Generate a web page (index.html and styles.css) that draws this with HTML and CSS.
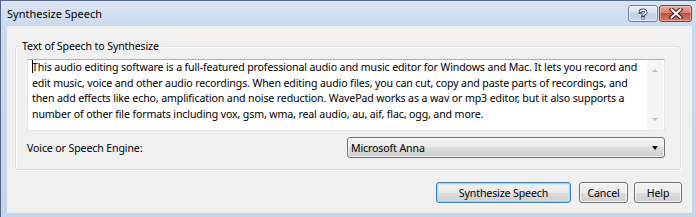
FILE: index.html
```html
<!DOCTYPE html>
<html>
<head>
<meta charset="utf-8">
<link rel="stylesheet" href="styles.css">
</head>
<body>
<div class="window">
  <div class="titlebar">
    <span class="title">Synthesize Speech</span>
    <div class="caption-buttons">
      <div class="cap-btn cap-help">
        <svg width="12" height="12" viewBox="0 0 12 12"><path d="M3.2 4.2 C3.2 1.6 8.8 1.4 8.8 4.2 C8.8 6 6 6 6 7.6" fill="none" stroke="#2d3b52" stroke-width="3.2" stroke-linecap="square"/><path d="M3.2 4.2 C3.2 1.6 8.8 1.4 8.8 4.2 C8.8 6 6 6 6 7.6" fill="none" stroke="#fff" stroke-width="1.6"/><rect x="4.6" y="8.6" width="2.8" height="2.8" fill="#2d3b52"/><rect x="5.2" y="9.2" width="1.6" height="1.6" fill="#fff"/></svg>
      </div>
      <div class="cap-btn cap-close">
        <svg width="14" height="11" viewBox="0 0 14 11"><path d="M2.5 1.5 L11.5 9.5 M11.5 1.5 L2.5 9.5" stroke="#4a1a12" stroke-width="4" stroke-linecap="square"/><path d="M2.5 1.5 L11.5 9.5 M11.5 1.5 L2.5 9.5" stroke="#fff" stroke-width="2" stroke-linecap="square"/></svg>
      </div>
    </div>
  </div>
  <div class="client">
    <fieldset class="group">
      <legend class="group-label">Text of Speech to Synthesize</legend>
      <div class="textbox">
        <div class="tb-text">
          <div class="line"><span class="caret"></span>This audio editing software is a full-featured professional audio and music editor for Windows and Mac. It lets you record and</div>
          <div class="line">edit music, voice and other audio recordings. When editing audio files, you can cut, copy and paste parts of recordings, and</div>
          <div class="line">then add effects like echo, amplification and noise reduction. WavePad works as a wav or mp3 editor, but it also supports a</div>
          <div class="line">number of other file formats including vox, gsm, wma, real audio, au, aif, flac, ogg, and more.</div>
        </div>
        <div class="tb-scroll">
          <span class="sarrow up"></span>
          <span class="sarrow down"></span>
        </div>
      </div>
      <div class="engine-row">
        <span class="engine-label">Voice or Speech Engine:</span>
        <div class="combo">
          <span class="combo-text">Microsoft Anna</span>
          <span class="combo-arrow"></span>
        </div>
      </div>
    </fieldset>
    <div class="button-row">
      <div class="btn btn-default btn-synth">Synthesize Speech</div>
      <div class="btn btn-cancel">Cancel</div>
      <div class="btn btn-help">Help</div>
    </div>
  </div>
</div>
</body>
</html>
```

FILE: styles.css
```css
html, body {
  margin: 0;
  padding: 0;
  background: #ffffff;
}
body {
  font-family: "Noto Sans", "Open Sans", sans-serif;
  font-size: 10.6px;
  letter-spacing: -0.13px;
  color: #000;
}
.window {
  width: 696px;
  height: 217px;
  box-sizing: border-box;
  display: flex;
  flex-direction: column;
  background: linear-gradient(to bottom, #d9e5f4 0px, #c9daee 26px, #c3d5ec 100%);
  border-left: 1px solid #53698a;
  border-top: 1px solid #53698a;
}
.titlebar {
  height: 25px;
  display: flex;
  align-items: flex-start;
  justify-content: space-between;
  padding-left: 6px;
  padding-right: 4px;
}
.title {
  font-size: 11px;
  letter-spacing: 0;
  line-height: 16px;
  margin-top: 5px;
}
.caption-buttons {
  display: flex;
  gap: 1px;
  margin-top: 4px;
}
.cap-btn {
  height: 17px;
  box-sizing: border-box;
  border-radius: 3px;
  display: flex;
  align-items: center;
  justify-content: center;
}
.cap-help {
  width: 30px;
  border: 1px solid #6d819e;
  background: linear-gradient(to bottom, #e6eef8 0%, #d3dfee 45%, #c0d0e5 50%, #cbdaec 100%);
  box-shadow: inset 0 0 0 1px rgba(255,255,255,0.5);
}
.cap-close {
  width: 33px;
  border: 1px solid #8a3d30;
  background: linear-gradient(to bottom, #e9a99b 0%, #d9806d 45%, #c4513c 50%, #d57a63 100%);
  box-shadow: inset 0 0 0 1px rgba(255,255,255,0.35);
}
.client {
  flex: 1;
  margin: 0 4px 4px 6px;
  background: #f0f0f0;
  padding-top: 12px;
  display: flex;
  flex-direction: column;
}
.group {
  margin: 0 11px 0 8px;
  padding: 5px 15px 11px 11px;
  border: 1px solid #d5dfe5;
  border-radius: 3px;
  box-shadow: inset 1px 1px 0 #fff, 1px 1px 0 #fff;
  min-width: 0;
}
.group-label {
  padding: 0 2px;
  margin-left: -7px;
  line-height: 16px;
  height: 16px;
}
.textbox {
  height: 72px;
  box-sizing: border-box;
  border: 1px solid #e2e3ea;
  border-top-color: #abadb3;
  border-bottom-color: #e3e9ef;
  background: #fff;
  display: flex;
}
.tb-text {
  flex: 1;
  padding: 0 0 0 4px;
  min-width: 0;
}
.line {
  white-space: nowrap;
  line-height: 15.7px;
}
.caret {
  display: inline-block;
  width: 1px;
  height: 13px;
  background: #000;
  vertical-align: -2px;
  margin-right: -1px;
}
.tb-scroll {
  width: 16px;
  margin-right: 1px;
  background: #f5f5f5;
  display: flex;
  flex-direction: column;
  justify-content: space-between;
  align-items: center;
  padding: 9px 0 9px;
}
.sarrow {
  width: 0;
  height: 0;
  border-left: 3px solid transparent;
  border-right: 3px solid transparent;
}
.sarrow.up {
  border-bottom: 3px solid #bdbdbd;
}
.sarrow.down {
  border-top: 3px solid #bdbdbd;
}
.engine-row {
  margin-top: 6px;
  display: flex;
  align-items: center;
  justify-content: space-between;
}
.engine-label {
  line-height: 16px;
}
.combo {
  width: 318px;
  height: 21px;
  box-sizing: border-box;
  border: 1px solid #707070;
  border-radius: 3px;
  background: linear-gradient(to bottom, #f2f2f2 0%, #ebebeb 50%, #dddddd 50%, #cfcfcf 100%);
  box-shadow: inset 0 0 0 1px rgba(255,255,255,0.7);
  display: flex;
  align-items: center;
  justify-content: space-between;
  padding: 0 6px 0 3px;
}
.combo-arrow {
  width: 0;
  height: 0;
  border-left: 3.5px solid transparent;
  border-right: 3.5px solid transparent;
  border-top: 4px solid #000;
}
.button-row {
  margin-top: 12px;
  margin-right: 10px;
  display: flex;
  justify-content: flex-end;
}
.btn {
  height: 21px;
  box-sizing: border-box;
  border: 1px solid #707070;
  border-radius: 3px;
  background: linear-gradient(to bottom, #f2f2f2 0%, #ebebeb 50%, #dddddd 50%, #cfcfcf 100%);
  box-shadow: inset 0 0 0 1px rgba(255,255,255,0.7);
  display: flex;
  align-items: center;
  justify-content: center;
}
.btn-default {
  border-color: #3c7fb1;
  box-shadow: inset 0 0 0 1px #9fd3f0, inset 0 0 0 2px rgba(200,235,252,0.6);
}
.btn-synth {
  width: 135px;
  margin-right: 8px;
}
.btn-cancel {
  width: 49px;
  margin-right: 6px;
}
.btn-help {
  width: 48px;
}
```
